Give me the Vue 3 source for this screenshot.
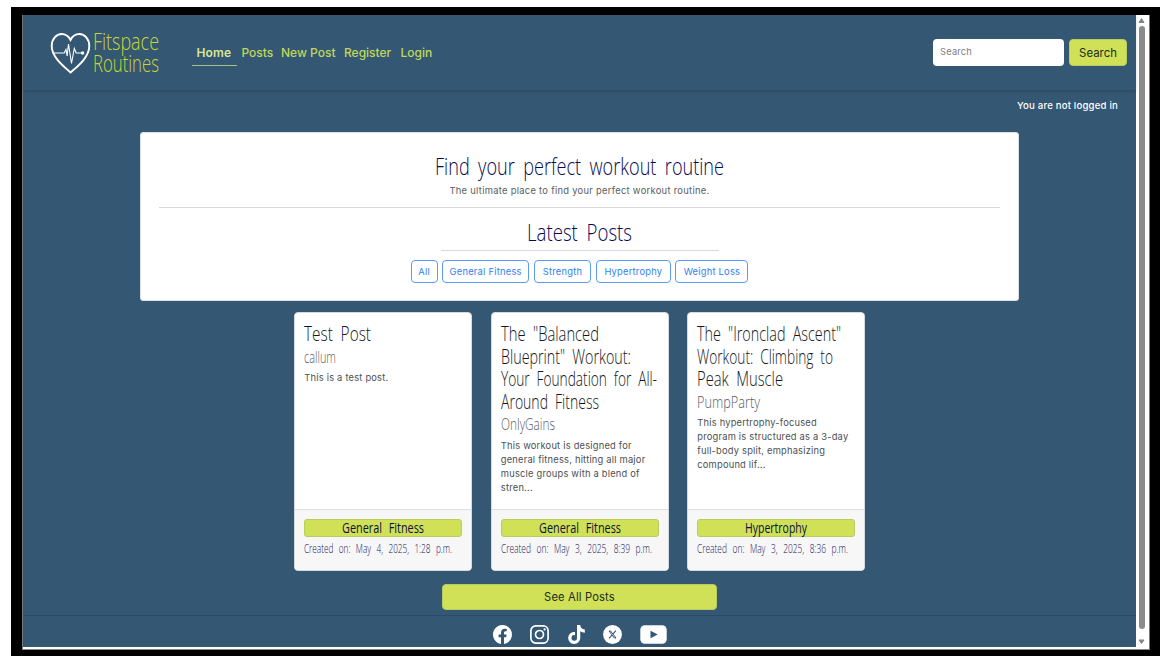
<script setup>
import { h } from 'vue'

const Ink = (props) =>
  h('svg', { class: 'ink', width: props.w, height: props.lh }, [
    h('text', {
      x: 0,
      y: props.base,
      'font-size': props.size,
      textLength: props.w,
      lengthAdjust: 'spacingAndGlyphs',
      fill: 'currentColor'
    }, props.text)
  ])
Ink.props = ['text', 'w', 'lh', 'base', 'size']

const links = ['Home', 'Posts', 'New Post', 'Register', 'Login']
const filters = [
  { name: 'All', size: 'f1' },
  { name: 'General Fitness', size: 'f2' },
  { name: 'Strength', size: 'f3' },
  { name: 'Hypertrophy', size: 'f4' },
  { name: 'Weight Loss', size: 'f5' }
]
const posts = [
  {
    title: [['Test Post', 67]],
    author: ['callum', 32],
    body: ['This is a test post.'],
    tag: ['General Fitness', 82],
    date: ['Created on: May 4, 2025, 1:28 p.m.', 148]
  },
  {
    title: [['The "Balanced', 98], ['Blueprint" Workout:', 130], ['Your Foundation for All-', 156], ['Around Fitness', 98]],
    author: ['OnlyGains', 54],
    body: ['This workout is designed for', 'general fitness, hitting all major', 'muscle groups with a blend of', 'stren...'],
    tag: ['General Fitness', 82],
    date: ['Created on: May 3, 2025, 8:39 p.m.', 151]
  },
  {
    title: [['The "Ironclad Ascent"', 144], ['Workout: Climbing to', 136], ['Peak Muscle', 86]],
    author: ['PumpParty', 63],
    body: ['This hypertrophy-focused', 'program is structured as a 3-day', 'full-body split, emphasizing', 'compound lif...'],
    tag: ['Hypertrophy', 62],
    date: ['Created on: May 3, 2025, 8:36 p.m.', 151]
  }
]
</script>

<template>
  <div class="frame">
    <div class="window">
      <div class="page">
        <header class="top">
          <a class="logo">
            <svg class="heart" width="42" height="44" viewBox="0 0 42 44" fill="none" stroke="#fff">
              <path d="M20.500 41.500C16 37 1.700 27 1.700 15C1.700 8 6.500 3 11.500 3C15.500 3 18.500 5 20.500 9C22.500 5 25.500 3 29.500 3C34.500 3 39.300 8 39.300 15C39.300 27 25.500 37 20.500 41.500Z" stroke-width="1.900" />
              <path d="M3.500 22H14.200L16 18.500L17.100 25L18.500 13L21.500 32.500L24.300 17.500L26.200 22H31.500" stroke-width="1.100" />
              <circle cx="32.600" cy="22" r="1.700" fill="#fff" stroke="none" />
            </svg>
            <span class="wordmark">
              <Ink text="Fitspace" :w="66" :lh="21" :base="18.500" :size="23" />
              <Ink text="Routines" :w="66" :lh="23" :base="20" :size="23" />
            </span>
          </a>
          <nav>
            <a v-for="(l, i) in links" :key="l" :class="['link', 'n' + i]">{{ l }}</a>
          </nav>
          <div class="search">
            <div class="field">Search</div>
            <div class="go">Search</div>
          </div>
        </header>
        <div class="status">You are not logged in</div>

        <section class="hero">
          <h1><Ink text="Find your perfect workout routine" :w="289" :lh="34" :base="23.500" :size="24" /></h1>
          <p class="tagline">The ultimate place to find your perfect workout routine.</p>
          <div class="rule"></div>
          <h2><Ink text="Latest Posts" :w="105" :lh="34" :base="25" :size="24" /></h2>
          <div class="rule short"></div>
          <div class="filters">
            <span v-for="f in filters" :key="f.name" :class="['filter', f.size]">{{ f.name }}</span>
          </div>
        </section>

        <section class="cards">
          <article v-for="(p, i) in posts" :key="i" class="card">
            <div class="content">
              <h3><Ink v-for="t in p.title" :key="t[0]" :text="t[0]" :w="t[1]" :lh="22.600" :base="17.500" :size="20.500" /></h3>
              <div class="author"><Ink :text="p.author[0]" :w="p.author[1]" :lh="22" :base="17" :size="17" /></div>
              <p class="excerpt"><span v-for="b in p.body" :key="b">{{ b }}</span></p>
            </div>
            <footer class="meta">
              <div class="tag"><Ink :text="p.tag[0]" :w="p.tag[1]" :lh="18" :base="13.500" :size="14" /></div>
              <div class="date"><Ink :text="p.date[0]" :w="p.date[1]" :lh="18" :base="13" :size="12.500" /></div>
            </footer>
          </article>
        </section>

        <div class="all">See All Posts</div>

        <footer class="social">
          <svg width="19" height="19" viewBox="0 0 16 16" fill="#fff"><path d="M16 8.049c0-4.446-3.582-8.050-8-8.050C3.580 0-.002 3.603-.002 8.050c0 4.017 2.926 7.347 6.750 7.951v-5.625h-2.030V8.050H6.750V6.275c0-2.017 1.195-3.131 3.022-3.131.876 0 1.791.157 1.791.157v1.980h-1.009c-.993 0-1.303.621-1.303 1.258v1.510h2.218l-.354 2.326H9.250V16c3.824-.604 6.750-3.934 6.750-7.951" /></svg>
          <svg width="19" height="19" viewBox="0 0 19 19" fill="none" stroke="#fff" stroke-width="1.700"><rect x=".9" y=".9" width="17.200" height="17.200" rx="4.800" /><circle cx="9.500" cy="9.500" r="4" /><circle cx="14.600" cy="4.400" r="1.150" fill="#fff" stroke="none" /></svg>
          <svg class="tiktok" width="17" height="19" viewBox="0 0 448 512" fill="#fff"><path d="M448 209.900a210.100 210.100 0 0 1-122.800-39.300v178.800A162.600 162.600 0 1 1 185 188.300v89.900a74.600 74.600 0 1 0 52.200 71.200V0h88a121.200 121.200 0 0 0 1.900 22.200 122.200 122.200 0 0 0 53.900 80.200 121.400 121.400 0 0 0 67 20.100z" /></svg>
          <svg width="19" height="19" viewBox="0 0 19 19"><circle cx="9.500" cy="9.500" r="9.400" fill="#fff" /><g fill="none" stroke="#345773"><path d="M6 6H7.600L13 13H11.400Z" stroke-width="1" /><path d="M12.900 5.700L10.100 8.800M8.900 10.100L6 13.300" stroke-width="1.100" /></g></svg>
          <svg width="27" height="19" viewBox="0 0 27 19"><rect x=".3" y=".3" width="26.400" height="18.400" rx="4.500" fill="#fff" /><path d="M10.500 5.700L17.700 9.500L10.500 13.300Z" fill="#345773" /></svg>
        </footer>
      </div>
      <div class="scroll">
        <svg width="9" height="7" viewBox="0 0 9 7"><path d="M4.500 1.500L7 5.500H2Z" fill="#858585" stroke="#858585" stroke-linejoin="round" /></svg>
        <div class="thumb"></div>
        <svg width="9" height="7" viewBox="0 0 9 7"><path d="M4.500 5.500L7 2H2Z" fill="#858585" stroke="#858585" stroke-linejoin="round" /></svg>
      </div>
    </div>
  </div>
</template>

<style>
body { background: #fff; }
</style>

<style scoped>
* { box-sizing: border-box; }
h1, h2, h3, p { margin: 0; font-weight: 400; }
.frame {
  width: 1149px; height: 649px; margin: 7px 0 0 11px; padding: 8px 0 0 11px;
  background: #000; font-family: Inter, "Open Sans", sans-serif; color: #212529;
}
.window { display: flex; width: 1128px; height: 635px; background: #fff; border-left: 1px solid #777; border-right: 1px solid #777; border-bottom: 1px solid #888; }
.page { width: 1113px; height: 632px; flex: none; background: #345773; display: flex; flex-direction: column; align-items: center; }
.ink { display: block; overflow: visible; font-family: "Open Sans", Lato, sans-serif; font-weight: 300; word-spacing: 5px; }

.top { width: 100%; height: 75px; flex: none; display: flex; align-items: center; padding: 0 9px 0 27px; box-shadow: 0 1px 3px rgba(0, 0, 0, .16); }
.logo { display: flex; width: 142px; height: 44px; }
.heart { flex: none; }
.wordmark { margin-left: 1px; color: #c8d832; }
nav { display: flex; height: 27px; margin-top: -1px; font-size: 12px; font-weight: 500; color: #c0d75c; line-height: 27px; }
.link { padding: 0 4.500px; white-space: nowrap; }
.n0 { width: 45px; font-weight: 600; letter-spacing: .15px; color: #d9e695; border-bottom: 1px solid #a9bd86; }
.n1 { width: 39.500px; }
.n2 { width: 63px; }
.n3 { width: 56.500px; }
.search { display: flex; gap: 5px; margin-left: auto; }
.field { width: 131.500px; height: 27px; padding-left: 7.500px; border-radius: 4px; background: #fff; color: #7b8085; font-size: 9.300px; letter-spacing: .2px; line-height: 26px; }
.go { width: 58px; height: 27px; border: 1px solid #b9cb62; border-radius: 4px; background: #d0e157; color: #222c20; text-align: center; font-size: 11.400px; line-height: 27px; }
.status { align-self: flex-end; margin: 9px 18px 0 0; height: 14px; color: #fff; font-size: 9.600px; font-weight: 500; letter-spacing: .19px; line-height: 14px; }

.hero { width: 879px; height: 169px; flex: none; margin-top: 19px; padding-top: 18px; background: #fff; border: 1px solid #dce1e5; border-radius: 3px; display: flex; flex-direction: column; align-items: center; }
h1, h2 { color: #09094f; }
h1 { height: 32px; }
.tagline { height: 16px; color: #5a5d61; font-size: 9.400px; letter-spacing: .28px; line-height: 16px; }
.rule { width: 841px; height: 1px; flex: none; margin-top: 8px; background: #d8d9da; }
.rule.short { width: 278px; margin-top: 0; }
h2 { margin-top: 8px; height: 34px; }
.filters { display: flex; gap: 4.600px; margin-top: 9px; }
.filter { height: 23px; border: 1px solid #5b9bf8; border-radius: 4px; color: #2f80f6; font-size: 9.300px; letter-spacing: .25px; line-height: 21px; text-align: center; white-space: nowrap; }
.f1 { width: 27px; }
.f2 { width: 87px; }
.f3 { width: 57.500px; }
.f4 { width: 75px; }
.f5 { width: 73px; }

.cards { display: flex; gap: 18.500px; margin-top: 11px; }
.card { width: 178px; height: 258.500px; display: flex; flex-direction: column; background: #fff; border: 1px solid #d5dade; border-radius: 4px; }
.content { height: 196px; padding: 10px 9.300px 0; }
h3 { color: #14171a; }
.author { color: #595c60; height: 22px; }
.excerpt { margin-top: 3.300px; color: #4c4f52; font-size: 9.300px; letter-spacing: .22px; line-height: 14px; }
.excerpt span { display: block; white-space: nowrap; }
.meta { flex: 1; padding: 9px 9px 0; background: #f7f7f7; border-top: 1px solid #dedfe0; border-radius: 0 0 3px 3px; color: #16165a; }
.tag { height: 18px; display: flex; justify-content: center; background: #d0e157; border: 1px solid #bacb60; border-radius: 3px; color: #0c1040; }
.tag .ink { margin-top: -1px; font-weight: 400; }
.date { margin-top: 3px; }

.all { width: 275px; height: 26px; flex: none; margin-top: 13.500px; border: 1px solid #b9cb62; border-radius: 4px; background: #d0e157; color: #222c20; font-size: 11.200px; letter-spacing: .15px; line-height: 25px; text-align: center; }
.social { width: 100%; height: 32px; flex: none; margin-top: 5px; padding: 9px 0 0 1px; border-top: 1px solid #2b4a65; display: flex; justify-content: center; gap: 17.800px; }
.tiktok { margin: 0 1px; }

.scroll { width: 13px; height: 634px; display: flex; flex-direction: column; align-items: center; padding: 2px 2px 2px 0; }
.thumb { width: 6px; height: 603px; margin: 2px 0 9px; border-radius: 3px; background: #8b8b8b; }
</style>
